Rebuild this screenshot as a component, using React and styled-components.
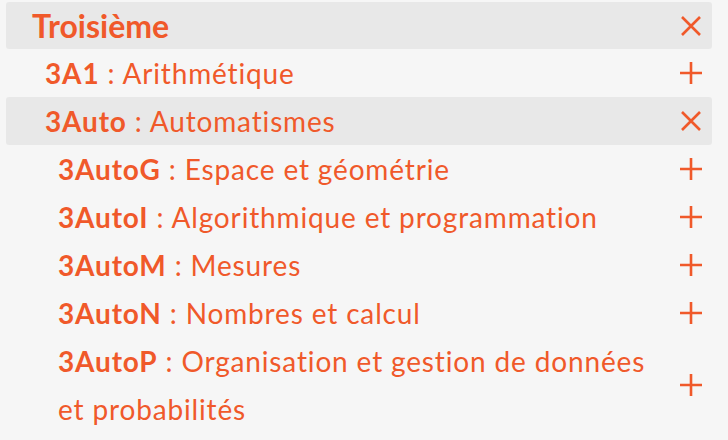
import React from "react";
import styled, { createGlobalStyle } from "styled-components";

const GlobalStyle = createGlobalStyle`
  html, body {
    margin: 0;
    padding: 0;
    background: #f6f6f6;
  }
  body {
    font-family: Lato, "Liberation Sans", sans-serif;
    font-variant-ligatures: none;
  }
`;

const ORANGE = "#f0592a";

const List = styled.ul`
  list-style: none;
  margin: 2px 16px 0 6px;
  padding: 0;
`;

const Row = styled.li`
  display: flex;
  align-items: center;
  justify-content: space-between;
  padding-left: ${(p) => p.$indent}px;
  padding-right: 8px;
  background: ${(p) => (p.$open ? "#e8e8e8" : "transparent")};
  border-radius: 3px;
  color: ${ORANGE};
`;

const Title = styled.div`
  font-size: ${(p) => (p.$big ? 32 : 28)}px;
  font-weight: ${(p) => (p.$big ? 700 : 400)};
  line-height: ${(p) => (p.$big ? 47 : 48)}px;
  letter-spacing: ${(p) => (p.$big ? 0 : 0.85)}px;
  max-width: 610px;
`;

const Code = styled.span`
  font-weight: 700;
`;

const Toggle = styled.button`
  flex: none;
  display: flex;
  align-items: center;
  justify-content: center;
  width: 26px;
  height: 26px;
  padding: 0;
  border: 0;
  background: none;
  color: ${ORANGE};
  cursor: pointer;
`;

const PlusIcon = () => (
  <svg width="24" height="24" viewBox="0 0 24 24">
    <path d="M12 1v22M1 12h22" stroke="currentColor" strokeWidth="2.6" fill="none" />
  </svg>
);

const CloseIcon = () => (
  <svg width="22" height="22" viewBox="0 0 22 22">
    <path d="M2 2l18 18M20 2L2 20" stroke="currentColor" strokeWidth="2.6" fill="none" />
  </svg>
);

const items = [
  { code: "3A1", label: "Arithmétique", indent: 39 },
  { code: "3Auto", label: "Automatismes", indent: 39, open: true },
  { code: "3AutoG", label: "Espace et géométrie", indent: 52 },
  { code: "3AutoI", label: "Algorithmique et programmation", indent: 52 },
  { code: "3AutoM", label: "Mesures", indent: 52 },
  { code: "3AutoN", label: "Nombres et calcul", indent: 52 },
  { code: "3AutoP", label: "Organisation et gestion de données et probabilités", indent: 52 },
];

const App = () => {
  return (
    <>
      <GlobalStyle />
      <List>
        <Row $indent={26} $open>
          <Title $big>Troisième</Title>
          <Toggle>
            <CloseIcon />
          </Toggle>
        </Row>
        {items.map((it) => (
          <Row key={it.code} $indent={it.indent} $open={it.open}>
            <Title>
              <Code>{it.code}</Code> : {it.label}
            </Title>
            <Toggle>{it.open ? <CloseIcon /> : <PlusIcon />}</Toggle>
          </Row>
        ))}
      </List>
    </>
  );
};

export default App;
